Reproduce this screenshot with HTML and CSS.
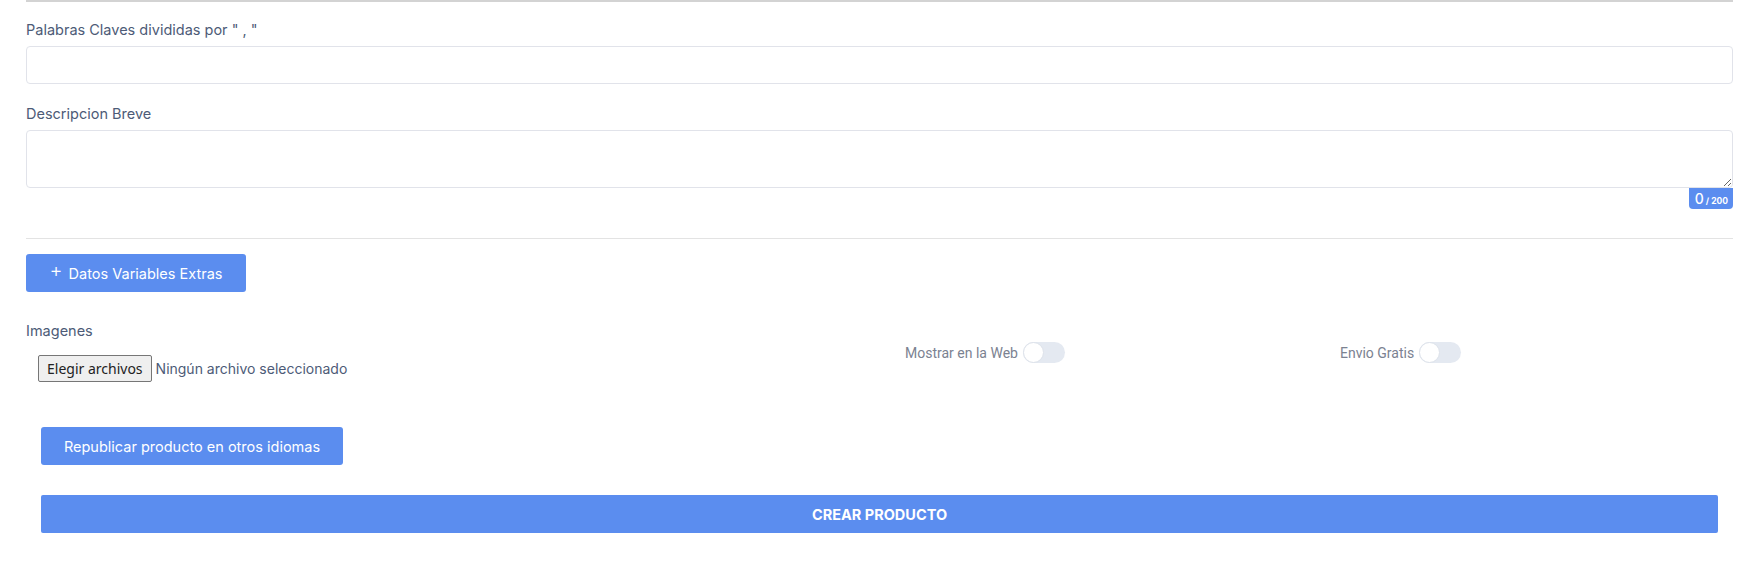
FILE: index.html
```html
<!DOCTYPE html>
<html lang="es">
<head>
<meta charset="utf-8">
<link rel="stylesheet" href="styles.css">
</head>
<body>
<div class="page">
  <div class="top-rule"></div>

  <div class="field first">
    <label class="label">Palabras Claves divididas por " , "</label>
    <input class="control" type="text">
  </div>

  <div class="field second">
    <label class="label">Descripcion Breve</label>
    <textarea class="control area"></textarea>
    <div class="counter-row"><span class="counter"><span class="count-num">0</span><span class="count-max"> / 200</span></span></div>
  </div>

  <div class="divider"></div>

  <div class="btn-row">
    <button class="btn btn-extras"><span class="plus">+</span>Datos Variables Extras</button>
  </div>

  <div class="media-row">
    <div class="images">
      <div class="label">Imagenes</div>
      <div class="file">
        <span class="file-btn">Elegir archivos</span>
        <span class="file-text">Ningún archivo seleccionado</span>
      </div>
    </div>
    <div class="switch-group sg-web">
      <span class="switch-label">Mostrar en la Web</span>
      <span class="switch"><span class="knob"></span></span>
    </div>
    <div class="switch-group sg-free">
      <span class="switch-label">Envio Gratis</span>
      <span class="switch"><span class="knob"></span></span>
    </div>
  </div>

  <div class="actions">
    <button class="btn btn-republish">Republicar producto en otros idiomas</button>
    <button class="btn btn-create">CREAR PRODUCTO</button>
  </div>
</div>
</body>
</html>
```

FILE: styles.css
```css
* { box-sizing: border-box; }

html, body {
  margin: 0;
  background: #ffffff;
}

body {
  font-family: Inter, "Noto Sans", Arial, sans-serif;
  color: #4b5a76;
}

.page {
  padding: 0 15px 0 26px;
}

.top-rule {
  height: 2px;
  background: #d3d3d3;
}

.field.first {
  margin-top: 18px;
}

.field.second {
  margin-top: 20px;
}

.label {
  display: block;
  font-size: 14.5px;
  line-height: 20px;
  color: #4d5b77;
  margin-bottom: 6px;
}

.control {
  display: block;
  width: 100%;
  height: 38px;
  border: 1px solid #e1e3ea;
  border-radius: 4px;
  background: #fff;
  font: inherit;
  outline: none;
}

.area {
  height: 58px;
  resize: vertical;
}

.counter-row {
  display: flex;
  justify-content: flex-end;
}

.counter {
  background: #5b8def;
  color: #fff;
  border-radius: 0 0 4px 4px;
  height: 21px;
  padding: 0 5px 0 6px;
  display: flex;
  align-items: baseline;
  line-height: 21px;
}

.count-num {
  font-size: 14px;
  font-weight: 500;
}

.count-max {
  font-size: 8.5px;
  font-weight: 700;
  margin-left: 2px;
}

.divider {
  margin-top: 29px;
  height: 1px;
  background: #e3e3e3;
}

.btn-row {
  margin-top: 15px;
}

.btn {
  border: none;
  background: #5b8def;
  color: #fff;
  border-radius: 3px;
  height: 38px;
  font-family: Inter, "Noto Sans", Arial, sans-serif;
  font-size: 14.5px;
  cursor: pointer;
}

.btn-extras {
  width: 220px;
  display: flex;
  align-items: center;
  justify-content: center;
}

.plus {
  font-size: 20px;
  font-weight: 300;
  line-height: 1;
  margin-right: 6px;
  position: relative;
  top: -3px;
}

.media-row {
  margin-top: 29px;
  display: flex;
  align-items: flex-start;
}

.images {
  width: 879px;
}

.images .label {
  margin-bottom: 14px;
}

.file {
  display: flex;
  align-items: center;
  padding-left: 12px;
}

.file-btn {
  font-family: "Noto Sans", Arial, sans-serif;
  font-size: 14px;
  color: #222;
  background: #efefef;
  border: 1px solid #767676;
  border-radius: 2px;
  height: 27px;
  line-height: 25px;
  padding: 0 8px;
}

.file-text {
  font-size: 14px;
  color: #4d5b77;
  margin-left: 4px;
}

.switch-group {
  display: flex;
  align-items: center;
  margin-top: 21px;
}

.sg-free {
  margin-left: 275px;
}

.switch-label {
  font-family: Roboto, Arial, sans-serif;
  font-size: 14px;
  color: #7b8291;
  margin-right: 5px;
}

.switch {
  width: 42px;
  height: 21px;
  border-radius: 11px;
  background: #e4e9f1;
  position: relative;
  display: block;
}

.knob {
  position: absolute;
  left: 0;
  top: 0;
  width: 21px;
  height: 21px;
  border-radius: 50%;
  background: #fff;
  border: 1px solid #dde2ea;
}

.actions {
  margin-top: 45px;
  padding-left: 15px;
  padding-right: 15px;
  display: flex;
  flex-direction: column;
  align-items: flex-start;
  gap: 30px;
}

.btn-republish {
  width: 302px;
}

.btn-create {
  width: 100%;
  font-weight: 700;
  border-radius: 2px;
}
```
